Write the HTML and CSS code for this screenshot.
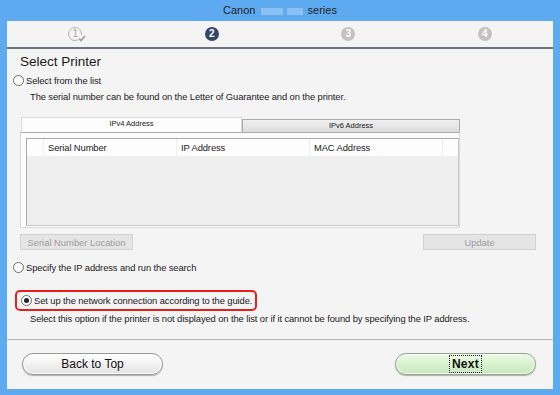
FILE: index.html
```html
<!DOCTYPE html>
<html lang="en">
<head>
  <meta charset="UTF-8">
  <title>Canon series</title>
  <link rel="stylesheet" href="styles.css">
</head>
<body>
  <div class="window">
    <div class="titlebar">Canon <span class="blur"></span><span class="blur short"></span> series</div>
    <div class="client">
      <div class="steps">
        <div class="step"><span class="num done">1<svg class="check" width="8" height="7" viewBox="0 0 8 7"><path d="M1 3.5 L3 5.5 L7 1" fill="none" stroke="#9a9a9a" stroke-width="1.6"/></svg></span></div>
        <div class="step"><span class="num current">2</span></div>
        <div class="step"><span class="num">3</span></div>
        <div class="step"><span class="num">4</span></div>
      </div>

      <div class="content">
        <h1>Select Printer</h1>
        <label class="option"><span class="radio"></span>Select from the list</label>
        <p class="note">The serial number can be found on the Letter of Guarantee and on the printer.</p>

        <div class="tabs">
          <div class="tab-row">
            <div class="tab active">IPv4 Address</div>
            <div class="tab">IPv6 Address</div>
          </div>
          <div class="tab-panel">
            <div class="list">
              <div class="list-head">
                <span class="col first"></span>
                <span class="col">Serial Number</span>
                <span class="col">IP Address</span>
                <span class="col">MAC Address</span>
                <span class="col last"></span>
              </div>
            </div>
          </div>
        </div>

        <div class="list-buttons">
          <button class="flat" disabled>Serial Number Location</button>
          <button class="flat" disabled>Update</button>
        </div>

        <label class="option second"><span class="radio"></span>Specify the IP address and run the search</label>

        <label class="option picked"><span class="radio on"></span>Set up the network connection according to the guide.</label>
        <p class="note">Select this option if the printer is not displayed on the list or if it cannot be found by specifying the IP address.</p>
      </div>

      <div class="footer">
        <button class="pill">Back to Top</button>
        <button class="pill next"><span class="focus">Next</span></button>
      </div>
    </div>
  </div>
</body>
</html>
```

FILE: styles.css
```css
body {
  margin: 0;
  font-family: "Liberation Sans", Arial, sans-serif;
  background-color: #5eaaf0;
}

.window {
  width: 560px;
  height: 395px;
  display: flex;
  flex-direction: column;
}

.titlebar {
  height: 21px;
  line-height: 20px;
  text-align: center;
  font-size: 11px;
  color: #1e1e1e;
}

.blur {
  display: inline-block;
  width: 22px;
  height: 7px;
  margin-left: 2px;
  background-color: #8cc0f2;
  vertical-align: middle;
}

.blur.short {
  width: 16px;
  margin-left: 4px;
  margin-right: 2px;
}

.client {
  flex: 1;
  margin: 0 7px 6px 7px;
  background-color: #f4f4f4;
  display: flex;
  flex-direction: column;
}

.steps {
  height: 26px;
  display: flex;
  border-bottom: 2px solid #6c7480;
}

.step {
  flex: 1;
  display: flex;
  align-items: center;
  justify-content: center;
}

.num {
  position: relative;
  width: 14px;
  height: 14px;
  border-radius: 50%;
  background-color: #c2c2c2;
  color: #fff;
  font-size: 10px;
  font-weight: bold;
  line-height: 14px;
  text-align: center;
}

.num.current {
  background-color: #34476a;
}

.num.done {
  width: 12px;
  height: 12px;
  line-height: 12px;
  background: none;
  border: 1px solid #b4b4b4;
  color: #a8a8a8;
  font-weight: normal;
}

.check {
  position: absolute;
  right: -5px;
  bottom: -2px;
  background-color: #f4f4f4;
}

.content {
  padding: 5px 0 0 6px;
  font-size: 9.4px;
  color: #1a1a1a;
}

h1 {
  margin: 0 0 2px 7px;
  font-size: 13.5px;
  font-weight: normal;
  line-height: 16px;
}

.option {
  display: flex;
  align-items: center;
  height: 16px;
  letter-spacing: -0.1px;
}

.radio {
  width: 9px;
  height: 9px;
  border: 1px solid #6a6a6a;
  border-radius: 50%;
  background-color: #fff;
  margin-right: 2px;
  position: relative;
}

.radio.on::after {
  content: "";
  position: absolute;
  left: 2px;
  top: 2px;
  width: 5px;
  height: 5px;
  border-radius: 50%;
  background-color: #222;
}

.note {
  margin: 2px 0 0 17px;
  line-height: 13px;
  letter-spacing: -0.1px;
}

.tabs {
  margin: 15px 0 0 7px;
  width: 440px;
}

.tab-row {
  display: flex;
  align-items: flex-end;
  height: 14px;
}

.tab {
  width: 216px;
  height: 12px;
  line-height: 12px;
  font-size: 7.5px;
  text-align: center;
  background: linear-gradient(#f0f0f0, #dcdcdc);
  border: 1px solid #acacac;
  border-bottom: none;
}

.tab.active {
  width: 219px;
  height: 14px;
  line-height: 12px;
  margin-left: 1px;
  background: #fcfcfc;
  border-color: #dadada;
}

.tab-panel {
  padding: 5px 0 4px 5px;
  background-color: #fcfcfc;
  border: 1px solid #dadada;
  border-top-color: #acacac;
  box-sizing: border-box;
  height: 96px;
}

.list {
  height: 86px;
  border: 1px solid #a9a9a9;
  border-right-color: #c8c8c8;
  border-bottom-color: #c8c8c8;
  background-color: #efefef;
}

.list-head {
  display: flex;
  height: 17px;
  background-color: #fdfdfd;
  font-size: 9.4px;
  line-height: 18px;
  letter-spacing: -0.1px;
}

.col {
  width: 128px;
  padding-left: 4px;
  border-right: 1px solid #f0f0f0;
}

.col.first {
  width: 16px;
  padding: 0;
}

.col.last {
  flex: 1;
  border: none;
}

.list-buttons {
  display: flex;
  justify-content: space-between;
  margin: 6px 17px 0 7px;
}

.flat {
  width: 113px;
  height: 16px;
  padding: 0;
  font-family: inherit;
  font-size: 9.4px;
  color: #9c9c9c;
  background-color: #e5e5e5;
  border: 1px solid #d2d2d2;
}

.option.second {
  margin-top: 9px;
}

.option.picked {
  box-sizing: border-box;
  width: 242px;
  height: 21px;
  margin: 15px 0 0 2px;
  padding-left: 4px;
  border: 2px solid #e3211c;
  border-radius: 5px;
}

.option.picked + .note {
  margin-top: 1px;
}

.footer {
  margin-top: auto;
  height: 47px;
  border-top: 1px solid #b4b4b4;
  display: flex;
  align-items: center;
  justify-content: space-between;
  padding: 0 17px 2px 15px;
}

.pill {
  width: 141px;
  height: 22px;
  padding: 0;
  border-radius: 11px;
  border: 1px solid #9a9a9a;
  background: linear-gradient(#ffffff, #f2f2f2 50%, #e2e2e2);
  box-shadow: 0 1px 1px #b0b0b0, inset 0 0 0 1px #fdfdfd;
  font-family: inherit;
  font-size: 12px;
  color: #111;
}

.pill.next {
  background: linear-gradient(#ecf9e6, #d9f2d0 50%, #c6e9bb);
  border-color: #8aa88a;
}

.focus {
  padding: 1px 2px;
  border: 1px dotted #222;
  font-weight: bold;
  letter-spacing: 0.3px;
}
```
